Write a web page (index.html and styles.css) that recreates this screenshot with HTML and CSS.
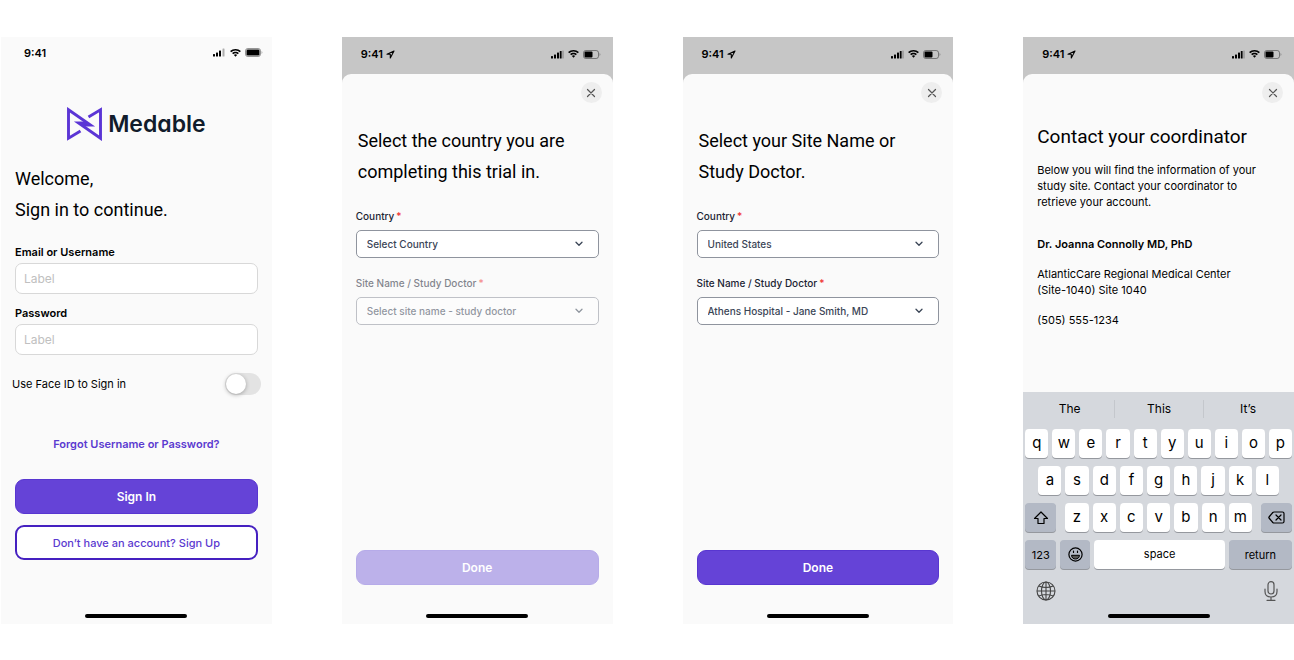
FILE: index.html
```html
<!DOCTYPE html>
<html lang="en">
<head>
    <meta charset="UTF-8">
    <meta name="viewport" content="width=device-width, initial-scale=1.0">
    <title>Medable</title>
    <link rel="stylesheet" href="styles.css">
</head>
<body>
<svg class="sprite" aria-hidden="true">
    <symbol id="signal" viewBox="0 0 13 9">
        <rect x="0" y="6" width="2" height="2.5" rx="0.5"/>
        <rect x="3" y="4.5" width="2" height="4" rx="0.5"/>
        <rect x="6" y="2.5" width="2" height="6" rx="0.5"/>
        <rect class="faded" x="9.5" y="0.5" width="2" height="8" rx="0.5"/>
    </symbol>
    <symbol id="signal-full" viewBox="0 0 13 9">
        <rect x="0" y="6" width="2" height="2.5" rx="0.5"/>
        <rect x="3" y="4.5" width="2" height="4" rx="0.5"/>
        <rect x="6" y="2.5" width="2" height="6" rx="0.5"/>
        <rect x="8.8" y="1" width="1.8" height="7.5" rx="0.5"/>
        <rect class="faded" x="11.4" y="0.5" width="1.2" height="8" rx="0.5"/>
    </symbol>
    <symbol id="wifi" viewBox="0 0 11 8">
        <path d="M5.5 0C3.4 0 1.5.8.1 2.1l1.1 1.2a6.2 6.2 0 0 1 8.6 0l1.1-1.2A7.8 7.8 0 0 0 5.5 0z"/>
        <path d="M5.5 2.7c-1.3 0-2.5.5-3.4 1.3l1.1 1.2a3.4 3.4 0 0 1 4.6 0L8.9 4C8 3.2 6.8 2.7 5.5 2.7z"/>
        <path d="M5.5 5.3c-.6 0-1.2.3-1.6.7l1.6 1.8L7.1 6c-.4-.4-1-.7-1.6-.7z"/>
    </symbol>
    <symbol id="battery-full" viewBox="0 0 18 9">
        <rect x="0.5" y="0.5" width="15" height="8" rx="2.3" fill="none" stroke="#000" stroke-opacity="0.4"/>
        <rect x="1.5" y="1.5" width="13" height="6" rx="1.3"/>
        <path class="faded" d="M16.5 3v3c.7-.3 1-.9 1-1.5s-.3-1.2-1-1.5z"/>
    </symbol>
    <symbol id="battery-half" viewBox="0 0 18 9">
        <rect x="0.5" y="0.5" width="15" height="8" rx="2.3" fill="none" stroke="#000" stroke-opacity="0.4"/>
        <rect x="1.5" y="1.5" width="8" height="6" rx="1"/>
        <path class="faded" d="M16.5 3v3c.7-.3 1-.9 1-1.5s-.3-1.2-1-1.5z"/>
    </symbol>
    <symbol id="location" viewBox="0 0 9 9">
        <path d="M8 1L1 4.3h3.3V8z" fill="none" stroke="#000" stroke-width="1.1" stroke-linejoin="round"/>
    </symbol>
    <symbol id="close" viewBox="0 0 10 10">
        <path d="M1.5 1.5l7 7M8.5 1.5l-7 7" fill="none" stroke="#555" stroke-width="1.2" stroke-linecap="round"/>
    </symbol>
    <symbol id="chevron" viewBox="0 0 8 6">
        <path d="M1 1.2l3 3 3-3" fill="none" stroke="currentColor" stroke-width="1.3" stroke-linecap="round" stroke-linejoin="round"/>
    </symbol>
</svg>

<main class="screens">
    <section class="phone">
        <div class="status status-login">
            <span class="time">9:41</span>
            <span class="status-icons">
                <svg width="13" height="9"><use href="#signal"/></svg>
                <svg width="11" height="8"><use href="#wifi"/></svg>
                <svg width="18" height="9"><use href="#battery-full"/></svg>
            </span>
        </div>
        <form class="login">
            <div class="logo">
                <svg width="35" height="34" viewBox="0 0 35 34" fill="none" stroke="#5b35d5" stroke-width="2.9">
                    <path d="M13.5 24L1.5 31.2V2.7L23.5 18H15.5"/>
                    <path d="M21.5 10L33.5 2.8V31.3L11.5 16H19.5"/>
                </svg>
                <span class="wordmark">Medable</span>
            </div>
            <h1>Welcome,<br>Sign in to continue.</h1>
            <div class="form-group">
                <label for="username">Email or Username</label>
                <input type="text" id="username" placeholder="Label">
            </div>
            <div class="form-group">
                <label for="password">Password</label>
                <input type="password" id="password" placeholder="Label">
            </div>
            <div class="face-id">
                <label for="faceId">Use Face ID to Sign in</label>
                <input type="checkbox" role="switch" id="faceId" class="toggle">
            </div>
            <a href="#" class="forgot">Forgot Username or Password?</a>
            <button type="submit" class="btn">Sign In</button>
            <button type="button" class="btn btn-outline">Don’t have an account? Sign Up</button>
        </form>
        <div class="home-bar"></div>
    </section>

    <section class="phone modal">
        <div class="status">
            <span class="time">9:41 <svg width="9" height="9"><use href="#location"/></svg></span>
            <span class="status-icons">
                <svg width="13" height="9"><use href="#signal-full"/></svg>
                <svg width="11" height="8"><use href="#wifi"/></svg>
                <svg width="18" height="9"><use href="#battery-half"/></svg>
            </span>
        </div>
        <form class="sheet">
            <button type="button" class="close" aria-label="Close"><svg width="10" height="10"><use href="#close"/></svg></button>
            <h2>Select the country you are completing this trial in.</h2>
            <div class="select-group">
                <label for="country1">Country<span class="required">*</span></label>
                <div class="select-box">
                    <select id="country1"><option>Select Country</option></select>
                    <svg width="8" height="6"><use href="#chevron"/></svg>
                </div>
            </div>
            <div class="select-group disabled">
                <label for="site1">Site Name / Study Doctor<span class="required">*</span></label>
                <div class="select-box">
                    <select id="site1" disabled><option>Select site name - study doctor</option></select>
                    <svg width="8" height="6"><use href="#chevron"/></svg>
                </div>
            </div>
            <button type="submit" class="btn done" disabled>Done</button>
            <div class="home-bar"></div>
        </form>
    </section>

    <section class="phone modal">
        <div class="status">
            <span class="time">9:41 <svg width="9" height="9"><use href="#location"/></svg></span>
            <span class="status-icons">
                <svg width="13" height="9"><use href="#signal-full"/></svg>
                <svg width="11" height="8"><use href="#wifi"/></svg>
                <svg width="18" height="9"><use href="#battery-half"/></svg>
            </span>
        </div>
        <form class="sheet">
            <button type="button" class="close" aria-label="Close"><svg width="10" height="10"><use href="#close"/></svg></button>
            <h2>Select your Site Name or Study Doctor.</h2>
            <div class="select-group">
                <label for="country2">Country<span class="required">*</span></label>
                <div class="select-box">
                    <select id="country2"><option>United States</option></select>
                    <svg width="8" height="6"><use href="#chevron"/></svg>
                </div>
            </div>
            <div class="select-group">
                <label for="site2">Site Name / Study Doctor<span class="required">*</span></label>
                <div class="select-box">
                    <select id="site2"><option>Athens Hospital - Jane Smith, MD</option></select>
                    <svg width="8" height="6"><use href="#chevron"/></svg>
                </div>
            </div>
            <button type="submit" class="btn done">Done</button>
            <div class="home-bar"></div>
        </form>
    </section>

    <section class="phone modal">
        <div class="status">
            <span class="time">9:41 <svg width="9" height="9"><use href="#location"/></svg></span>
            <span class="status-icons">
                <svg width="13" height="9"><use href="#signal-full"/></svg>
                <svg width="11" height="8"><use href="#wifi"/></svg>
                <svg width="18" height="9"><use href="#battery-half"/></svg>
            </span>
        </div>
        <div class="sheet contact">
            <button type="button" class="close" aria-label="Close"><svg width="10" height="10"><use href="#close"/></svg></button>
            <h2>Contact your coordinator</h2>
            <p>Below you will find the information of your study site. Contact your coordinator to retrieve your account.</p>
            <p class="doctor">Dr. Joanna Connolly MD, PhD</p>
            <p>AtlanticCare Regional Medical Center<br>(Site-1040) Site 1040</p>
            <p>(505) 555-1234</p>
        </div>
        <div class="keyboard">
            <div class="suggestions">
                <button type="button">The</button>
                <button type="button">This</button>
                <button type="button">It’s</button>
            </div>
            <div class="key-row">
                <button type="button">q</button>
                <button type="button">w</button>
                <button type="button">e</button>
                <button type="button">r</button>
                <button type="button">t</button>
                <button type="button">y</button>
                <button type="button">u</button>
                <button type="button">i</button>
                <button type="button">o</button>
                <button type="button">p</button>
            </div>
            <div class="key-row key-row-middle">
                <button type="button">a</button>
                <button type="button">s</button>
                <button type="button">d</button>
                <button type="button">f</button>
                <button type="button">g</button>
                <button type="button">h</button>
                <button type="button">j</button>
                <button type="button">k</button>
                <button type="button">l</button>
            </div>
            <div class="key-row key-row-shift">
                <button type="button" class="dark" aria-label="Shift">
                    <svg width="16" height="14" viewBox="0 0 16 14" fill="none" stroke="#000" stroke-width="1.2" stroke-linejoin="round"><path d="M8 1L1.5 7.5H5V12.5H11V7.5H14.5z"/></svg>
                </button>
                <div class="letters">
                    <button type="button">z</button>
                    <button type="button">x</button>
                    <button type="button">c</button>
                    <button type="button">v</button>
                    <button type="button">b</button>
                    <button type="button">n</button>
                    <button type="button">m</button>
                </div>
                <button type="button" class="dark" aria-label="Delete">
                    <svg width="17" height="13" viewBox="0 0 17 13" fill="none" stroke="#000" stroke-width="1.2" stroke-linejoin="round" stroke-linecap="round"><path d="M6 1H14.5Q16 1 16 2.5V10.5Q16 12 14.5 12H6Q5.3 12 4.8 11.5L1 7Q.6 6.5 1 6L4.8 1.5Q5.3 1 6 1zM8 4l5 5M13 4l-5 5"/></svg>
                </button>
            </div>
            <div class="key-row key-row-space">
                <button type="button" class="dark">123</button>
                <button type="button" class="dark" aria-label="Emoji">
                    <svg width="15" height="15" viewBox="0 0 15 15" fill="none" stroke="#000" stroke-width="1.2"><circle cx="7.5" cy="7.5" r="6.6"/><path d="M3.5 8.3H11.5C11.3 10.7 9.7 12 7.5 12S3.7 10.7 3.5 8.3z" fill="#555" stroke-width="1"/><path d="M5.5 4.2v1.2M9.5 4.2v1.2" stroke-linecap="round"/></svg>
                </button>
                <button type="button">space</button>
                <button type="button" class="dark">return</button>
            </div>
            <div class="keyboard-footer">
                <button type="button" aria-label="Next keyboard">
                    <svg width="20" height="20" viewBox="0 0 20 20" fill="none" stroke="#444" stroke-width="1.1"><circle cx="10" cy="10" r="9"/><ellipse cx="10" cy="10" rx="4.5" ry="9"/><path d="M10 1V19M1 10H19M2.8 5Q10 8 17.2 5M2.8 15Q10 12 17.2 15"/></svg>
                </button>
                <button type="button" aria-label="Dictation">
                    <svg width="14" height="20" viewBox="0 0 14 20" fill="none" stroke="#555" stroke-width="1.2" stroke-linecap="round"><rect x="4" y="0.7" width="6" height="12.3" rx="3"/><path d="M1 8V10.5C1 14 3.5 16 7 16S13 14 13 10.5V8M7 16V19.3M3 19.3H11"/></svg>
                </button>
            </div>
            <div class="home-bar"></div>
        </div>
    </section>
</main>
</body>
</html>
```
FILE: styles.css
```css
*, *:before, *:after {
    box-sizing: border-box;
}

body {
    margin: 0;
    background-color: #ffffff;
    color: #000000;
    font-family: Inter, 'Liberation Sans', sans-serif;
    font-size: 12px;
    line-height: 16px;
}

button, input, select {
    font: inherit;
    color: inherit;
}

button {
    border: none;
    padding: 0;
    cursor: pointer;
}

svg {
    display: block;
    flex: none;
}

.sprite {
    position: absolute;
    width: 0;
    height: 0;
}

.faded {
    opacity: 0.3;
}

.screens {
    display: grid;
    grid-template-columns: repeat(4, 1fr);
    gap: 70px;
    padding: 37px 0 36px 1px;
}

.phone {
    display: flex;
    flex-direction: column;
    background-color: #fafafa;
}

.modal {
    background-color: #c6c6c6;
}

/* Status bar */
.status {
    display: flex;
    justify-content: space-between;
    align-items: center;
    height: 37px;
    padding: 0 12px 3px 19px;
}

.status-login {
    height: 31px;
    padding: 0 9px 0 23px;
}

.time {
    display: flex;
    align-items: center;
    gap: 3px;
    font-size: 11px;
    font-weight: 600;
}

.status-icons {
    display: flex;
    align-items: center;
    gap: 4px;
}

.home-bar {
    flex: none;
    align-self: center;
    width: 102px;
    height: 4px;
    margin: auto auto 6px;
    border-radius: 2px;
    background-color: #000000;
}

h1, h2 {
    margin: 0;
    font-family: Roboto, 'Liberation Sans', sans-serif;
    font-size: 18px;
    font-weight: 400;
    line-height: 31px;
}

/* Login */
.login {
    display: flex;
    flex-direction: column;
    padding: 39px 14px 54px;
}

.logo {
    display: flex;
    align-items: center;
    align-self: center;
    gap: 6px;
    height: 34px;
}

.wordmark {
    color: #111c2b;
    font-size: 23px;
    font-weight: 600;
    font-feature-settings: 'cv11';
}

.login h1 {
    margin: 22px 0 19px;
}

.form-group {
    display: flex;
    flex-direction: column;
    gap: 3px;
    margin-bottom: 11px;
}

.form-group label {
    font-size: 11px;
    font-weight: 600;
}

.form-group input {
    width: 100%;
    height: 31px;
    padding: 0 8px;
    border: 1px solid #d8d8d8;
    border-radius: 7px;
    background-color: #ffffff;
}

.form-group input::placeholder {
    color: #c0c0c0;
}

.face-id {
    display: flex;
    justify-content: space-between;
    align-items: center;
    margin: 7px -3px 41px;
    font-size: 11px;
}

.toggle {
    appearance: none;
    width: 36px;
    height: 22px;
    margin: 0;
    border-radius: 11px;
    background-color: #e3e3e3;
}

.toggle::before {
    content: '';
    display: block;
    width: 20px;
    height: 20px;
    margin: 1px;
    border-radius: 50%;
    background-color: #ffffff;
    box-shadow: 0 1px 4px rgba(0, 0, 0, 0.3);
}

.toggle:checked {
    background-color: #6543d7;
}

.toggle:checked::before {
    margin-left: 15px;
}

.forgot {
    align-self: center;
    margin-bottom: 27px;
    color: #5b3ad0;
    font-size: 11px;
    font-weight: 600;
    text-decoration: none;
}

.btn {
    height: 35px;
    border: 1px solid #5836d0;
    border-radius: 9px;
    background-color: #6543d7;
    color: #ffffff;
    font-weight: 600;
}

.btn:disabled {
    border-color: #b6abe9;
    background-color: #bcb1ea;
}

.btn-outline {
    margin-top: 11px;
    border: 2px solid #4520c0;
    background-color: #ffffff;
    color: #5b3ad0;
    font-size: 11px;
    font-weight: 500;
}

/* Modal sheet */
.sheet {
    flex: 1;
    display: flex;
    flex-direction: column;
    padding: 8px 14px 0;
    border-radius: 9px 9px 0 0;
    background-color: #fafafa;
}

.sheet .home-bar {
    margin-top: 0;
}

.close {
    display: grid;
    place-items: center;
    align-self: flex-end;
    width: 21px;
    height: 21px;
    margin-right: -3px;
    border-radius: 50%;
    background-color: #eeeeee;
}

.sheet h2 {
    margin: 22px 2px;
}

.select-group {
    display: flex;
    flex-direction: column;
    gap: 7px;
    margin-bottom: 18px;
    color: #1b2433;
    font-size: 10px;
    font-weight: 500;
}

.select-group label {
    line-height: 14px;
}

.required {
    margin-left: 2px;
    color: #f03030;
}

.select-box {
    display: grid;
    align-items: center;
    color: #3a4556;
}

.select-box select,
.select-box svg {
    grid-area: 1 / 1;
}

.select-box select {
    appearance: none;
    width: 100%;
    height: 28px;
    padding: 0 30px 0 10px;
    border: 1px solid #8f949e;
    border-radius: 5px;
    background-color: #ffffff;
    color: #3a4556;
    opacity: 1;
}

.select-box svg {
    justify-self: end;
    margin-right: 16px;
    pointer-events: none;
}

.disabled {
    opacity: 0.55;
}

.sheet .done {
    margin: auto 0 29px;
}

/* Contact */
.sheet.contact h2 {
    margin: 18px 0 10px;
    font-size: 19px;
}

.contact p {
    margin: 0 12px 14px 0;
    font-size: 11px;
}

.contact .doctor {
    margin-top: 12px;
    font-weight: 600;
}

/* Keyboard */
.keyboard {
    display: flex;
    flex-direction: column;
    gap: 8px;
    padding: 0 2px;
    background-color: #d5d8dd;
}

.suggestions {
    display: grid;
    grid-template-columns: repeat(3, 1fr);
    align-items: center;
    height: 29px;
    padding-top: 4px;
}

.suggestions button {
    height: 18px;
    background: none;
}

.suggestions button + button {
    border-left: 1px solid #c4c7cc;
}

.key-row {
    display: grid;
    grid-template-columns: repeat(10, 1fr);
    gap: 4px;
    font-size: 15px;
}

.key-row button {
    display: grid;
    place-items: center;
    height: 29px;
    padding-bottom: 2px;
    border-radius: 4px;
    background-color: #ffffff;
    box-shadow: 0 1px 0 #95989e;
}

.key-row .dark {
    padding-bottom: 0;
    background-color: #b3b9c5;
}

.key-row-middle {
    grid-template-columns: repeat(9, 1fr);
    padding: 0 13px;
}

.key-row-shift {
    grid-template-columns: 31px 1fr 31px;
    gap: 9px;
}

.letters {
    display: grid;
    grid-template-columns: repeat(7, 1fr);
    gap: 4px;
}

.key-row-space {
    grid-template-columns: 31fr 30fr 130fr 63fr;
    font-size: 11px;
}

.keyboard-footer {
    display: flex;
    justify-content: space-between;
    padding: 4px 14px 5px 11px;
}

.keyboard-footer button {
    background: none;
}
```
